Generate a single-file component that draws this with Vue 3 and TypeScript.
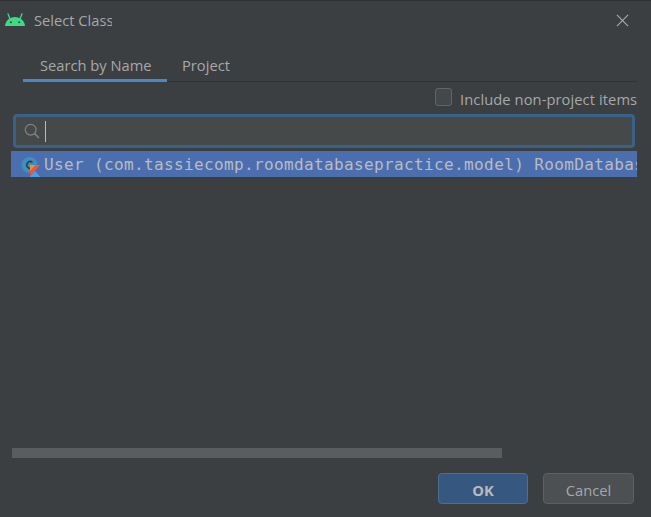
<script setup lang="ts">
const title = 'Select Class'
const tabs = ['Search by Name', 'Project']
</script>

<template>
  <div class="dialog">
    <header class="titlebar">
      <svg class="android" width="20" height="13" viewBox="0 0 20 13">
        <path d="M0 13C.4 7.800 4.700 4 10 4S19.600 7.800 20 13Z" fill="#3ddc84" />
        <path d="M5 6 3 .8M15 6 17 .8" stroke="#3ddc84" stroke-width="1.300" stroke-linecap="round" />
        <circle cx="5.800" cy="9.200" r="1" fill="#3c3f41" />
        <circle cx="14.200" cy="9.200" r="1" fill="#3c3f41" />
      </svg>
      <span class="title">{{ title }}</span>
      <svg class="close" width="14" height="14" viewBox="0 0 14 14">
        <path d="M1 1 13 13M13 1 1 13" stroke="#a9abad" stroke-width="1.200" fill="none" />
      </svg>
    </header>

    <nav class="tabs">
      <span class="tab active">{{ tabs[0] }}</span>
      <span class="tab">{{ tabs[1] }}</span>
    </nav>

    <div class="options">
      <span class="checkbox"></span>
      <span class="opt-label">Include non-project items</span>
    </div>

    <div class="search">
      <svg class="glass" width="16" height="16" viewBox="0 0 16 16">
        <circle cx="6.700" cy="6.700" r="5.400" fill="none" stroke="#7f8385" stroke-width="1.200" />
        <path d="M10.600 10.600 15 15" stroke="#7f8385" stroke-width="1.500" />
      </svg>
      <span class="caret"></span>
    </div>

    <div class="result">
      <span class="class-icon">
        <svg width="20" height="20" viewBox="0 0 20 20">
          <circle cx="8.500" cy="8" r="8" fill="#3f8fc0" />
          <path d="M11.500 5.500A3.400 3.400 0 1 0 11.500 10.500" fill="none" stroke="#2f3f4c" stroke-width="1.500" />
          <path d="M9 8H19L14 14 19 20H9Z" fill="#e05a45" />
          <path d="M9 8H14.500L9 14Z" fill="#f0902e" />
          <path d="M9 20 14 14 19 20Z" fill="#3fa3f0" />
        </svg>
      </span>
      <span class="result-text">User (com.tassiecomp.roomdatabasepractice.model) RoomDatabasePractice.app</span>
    </div>

    <div class="spacer"></div>

    <div class="scrollbar"><div class="thumb"></div></div>

    <footer class="buttons">
      <button class="btn primary">OK</button>
      <button class="btn secondary">Cancel</button>
    </footer>
  </div>
</template>

<style>
html, body { margin: 0; background: #3c3f41; overflow: hidden; }
</style>

<style scoped>
.dialog {
  width: 651px;
  height: 517px;
  box-sizing: border-box;
  background: #3c3f41;
  border-top: 1px solid #2f3133;
  display: flex;
  flex-direction: column;
  font-family: "Open Sans", "Noto Sans", sans-serif;
  font-size: 14.7px;
  color: #a6a8aa;
  overflow: hidden;
}
.titlebar {
  height: 38px;
  display: flex;
  align-items: center;
  padding: 0 22px 0 5px;
  flex: none;
}
.android { flex: none; margin-top: -1px; }
.title { margin-left: 9px; width: 78px; overflow: hidden; white-space: nowrap; flex: none; }
.close { margin-left: auto; width: 13px; height: 13px; }
.tabs {
  margin: 11px 14px 0 23px;
  height: 32px;
  box-sizing: border-box;
  display: flex;
  border-bottom: 1px solid #323232;
  flex: none;
}
.tab {
  padding: 5px 16px 0 17px;
  box-sizing: border-box;
  height: 32px;
  line-height: 20px;
  white-space: nowrap;
}
.tab.active { width: 144px; border-bottom: 3px solid #4a88c7; }
.tab:not(.active) { padding-left: 15px; }
.options {
  display: flex;
  align-items: center;
  justify-content: flex-end;
  height: 24px;
  margin: 3px 14px 0 0;
  flex: none;
}
.checkbox {
  width: 15px;
  height: 16px;
  border: 1px solid #646464;
  border-radius: 3px;
  background: #43494a;
  margin-right: 8px;
  flex: none;
}
.opt-label { white-space: nowrap; width: 177px; overflow: hidden; padding-top: 3px; letter-spacing: 0.08px; }
.search {
  margin: 5px 16px 0 13px;
  height: 34px;
  box-sizing: border-box;
  border: 3px solid #3a6289;
  border-radius: 4px;
  background: #45494a;
  display: flex;
  align-items: center;
  padding-left: 8px;
  flex: none;
}
.glass { flex: none; }
.caret { width: 1px; height: 21px; background: #bbbbbb; margin-left: 5px; }
.result {
  margin: 3px 14px 0 11px;
  height: 26px;
  background: #4b6eaf;
  display: flex;
  align-items: center;
  overflow: hidden;
  flex: none;
}
.class-icon { width: 33px; padding-left: 10px; box-sizing: border-box; height: 20px; flex: none; margin-top: 6px; }
.result-text {
  font-family: "DejaVu Sans Mono", "Liberation Mono", monospace;
  font-size: 16px;
  letter-spacing: 0.37px;
  white-space: nowrap;
  color: #b8bcc2;
}
.spacer { flex: 1; }
.scrollbar { margin: 0 0 0 12px; height: 10px; flex: none; }
.thumb { width: 490px; height: 10px; background: #5a5c5e; }
.buttons {
  display: flex;
  justify-content: flex-end;
  gap: 15px;
  padding: 15px 17px 13px 0;
  flex: none;
}
.btn {
  width: 90px;
  height: 31px;
  box-sizing: border-box;
  border: 1px solid #5e6060;
  border-radius: 4px;
  background: #4c5052;
  color: #a6a8aa;
  font-family: inherit;
  font-size: 14.7px;
  padding: 2px 0 0;
}
.btn.secondary { width: 91px; }
.btn.primary {
  background: #365880;
  border-color: #4c708c;
  color: #bbbbbb;
  font-weight: 700;
}
</style>
